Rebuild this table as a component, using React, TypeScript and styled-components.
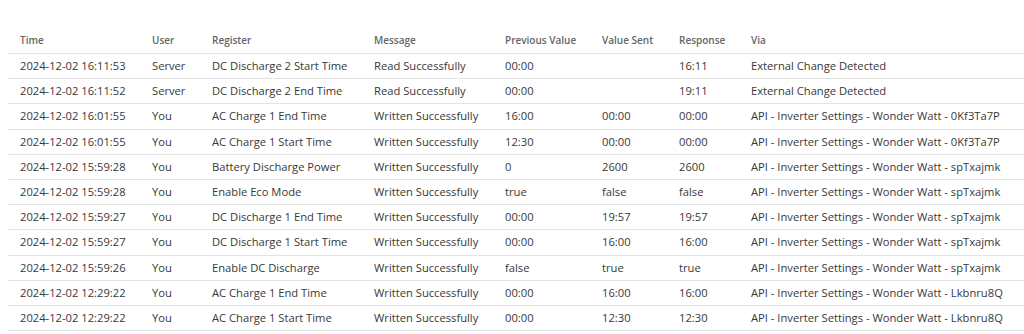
import React from 'react';
import styled, { createGlobalStyle } from 'styled-components';

const GlobalStyle = createGlobalStyle`
  html, body {
    margin: 0;
    padding: 0;
    background: #ffffff;
  }
  body {
    font-family: 'Open Sans', 'Liberation Sans', sans-serif;
    color: #333333;
  }
`;

const Page = styled.div`
  padding: 29px 0 0 8px;
`;

const Table = styled.table`
  width: 100%;
  border-collapse: collapse;
  table-layout: fixed;
`;

const HeadCell = styled.th<{ $width?: number }>`
  box-sizing: border-box;
  width: ${(p) => (p.$width ? `${p.$width}px` : 'auto')};
  text-align: left;
  font-size: 10px;
  font-weight: 600;
  color: #666666;
  line-height: 14px;
  padding: 4px 12px 6px;
  border-bottom: 1px solid #e3e3e3;
  white-space: nowrap;
`;

const Row = styled.tr`
  border-bottom: 1px solid #e3e3e3;
`;

const Cell = styled.td`
  box-sizing: border-box;
  font-size: 11.2px;
  line-height: 16px;
  color: #383838;
  padding: 4.1px 12px;
  white-space: nowrap;
  overflow: hidden;
`;

interface LogEntry {
  time: string;
  user: string;
  register: string;
  message: string;
  previous: string;
  sent: string;
  response: string;
  via: string;
}

const columns: { label: string; width?: number }[] = [
  { label: 'Time', width: 132 },
  { label: 'User', width: 60 },
  { label: 'Register', width: 162 },
  { label: 'Message', width: 131 },
  { label: 'Previous Value', width: 97 },
  { label: 'Value Sent', width: 77 },
  { label: 'Response', width: 72 },
  { label: 'Via' },
];

const entries: LogEntry[] = [
  { time: '2024-12-02 16:11:53', user: 'Server', register: 'DC Discharge 2 Start Time', message: 'Read Successfully', previous: '00:00', sent: '', response: '16:11', via: 'External Change Detected' },
  { time: '2024-12-02 16:11:52', user: 'Server', register: 'DC Discharge 2 End Time', message: 'Read Successfully', previous: '00:00', sent: '', response: '19:11', via: 'External Change Detected' },
  { time: '2024-12-02 16:01:55', user: 'You', register: 'AC Charge 1 End Time', message: 'Written Successfully', previous: '16:00', sent: '00:00', response: '00:00', via: 'API - Inverter Settings - Wonder Watt - 0Kf3Ta7P' },
  { time: '2024-12-02 16:01:55', user: 'You', register: 'AC Charge 1 Start Time', message: 'Written Successfully', previous: '12:30', sent: '00:00', response: '00:00', via: 'API - Inverter Settings - Wonder Watt - 0Kf3Ta7P' },
  { time: '2024-12-02 15:59:28', user: 'You', register: 'Battery Discharge Power', message: 'Written Successfully', previous: '0', sent: '2600', response: '2600', via: 'API - Inverter Settings - Wonder Watt - spTxajmk' },
  { time: '2024-12-02 15:59:28', user: 'You', register: 'Enable Eco Mode', message: 'Written Successfully', previous: 'true', sent: 'false', response: 'false', via: 'API - Inverter Settings - Wonder Watt - spTxajmk' },
  { time: '2024-12-02 15:59:27', user: 'You', register: 'DC Discharge 1 End Time', message: 'Written Successfully', previous: '00:00', sent: '19:57', response: '19:57', via: 'API - Inverter Settings - Wonder Watt - spTxajmk' },
  { time: '2024-12-02 15:59:27', user: 'You', register: 'DC Discharge 1 Start Time', message: 'Written Successfully', previous: '00:00', sent: '16:00', response: '16:00', via: 'API - Inverter Settings - Wonder Watt - spTxajmk' },
  { time: '2024-12-02 15:59:26', user: 'You', register: 'Enable DC Discharge', message: 'Written Successfully', previous: 'false', sent: 'true', response: 'true', via: 'API - Inverter Settings - Wonder Watt - spTxajmk' },
  { time: '2024-12-02 12:29:22', user: 'You', register: 'AC Charge 1 End Time', message: 'Written Successfully', previous: '00:00', sent: '16:00', response: '16:00', via: 'API - Inverter Settings - Wonder Watt - Lkbnru8Q' },
  { time: '2024-12-02 12:29:22', user: 'You', register: 'AC Charge 1 Start Time', message: 'Written Successfully', previous: '00:00', sent: '12:30', response: '12:30', via: 'API - Inverter Settings - Wonder Watt - Lkbnru8Q' },
];

const App: React.FC = () => {
  return (
    <Page>
      <GlobalStyle />
      <Table>
        <thead>
          <tr>
            {columns.map((col) => (
              <HeadCell key={col.label} $width={col.width}>
                {col.label}
              </HeadCell>
            ))}
          </tr>
        </thead>
        <tbody>
          {entries.map((entry, idx) => (
            <Row key={`log-row-${idx}`}>
              <Cell>{entry.time}</Cell>
              <Cell>{entry.user}</Cell>
              <Cell>{entry.register}</Cell>
              <Cell>{entry.message}</Cell>
              <Cell>{entry.previous}</Cell>
              <Cell>{entry.sent}</Cell>
              <Cell>{entry.response}</Cell>
              <Cell>{entry.via}</Cell>
            </Row>
          ))}
        </tbody>
      </Table>
    </Page>
  );
};

export default App;
